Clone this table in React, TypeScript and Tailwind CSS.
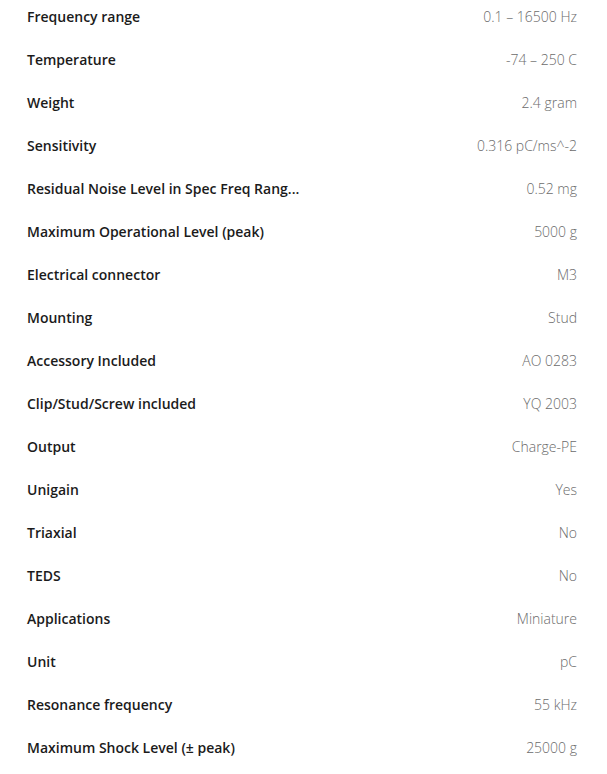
const specs: [string, string][] = [
    ["Frequency range", "0.1 – 16500 Hz"],
    ["Temperature", "-74 – 250 C"],
    ["Weight", "2.4 gram"],
    ["Sensitivity", "0.316 pC/ms^-2"],
    ["Residual Noise Level in Spec Freq Rang...", "0.52 mg"],
    ["Maximum Operational Level (peak)", "5000 g"],
    ["Electrical connector", "M3"],
    ["Mounting", "Stud"],
    ["Accessory Included", "AO 0283"],
    ["Clip/Stud/Screw included", "YQ 2003"],
    ["Output", "Charge-PE"],
    ["Unigain", "Yes"],
    ["Triaxial", "No"],
    ["TEDS", "No"],
    ["Applications", "Miniature"],
    ["Unit", "pC"],
    ["Resonance frequency", "55 kHz"],
    ["Maximum Shock Level (± peak)", "25000 g"],
];

const App = () => {
    return (
        <div className="min-h-screen bg-white font-['Open_Sans',sans-serif] text-[14px] leading-5">
            <div className="flex flex-col gap-[23px] pt-[7px] pl-[27px] pr-[30px]">
                {specs.map(([label, value]) => (
                    <div key={label} className="flex items-center justify-between">
                        <span className="font-semibold text-[#1b1b1b]">{label}</span>
                        <span className="font-light text-[#6b6b6b]">{value}</span>
                    </div>
                ))}
            </div>
        </div>
    );
};

export default App;
